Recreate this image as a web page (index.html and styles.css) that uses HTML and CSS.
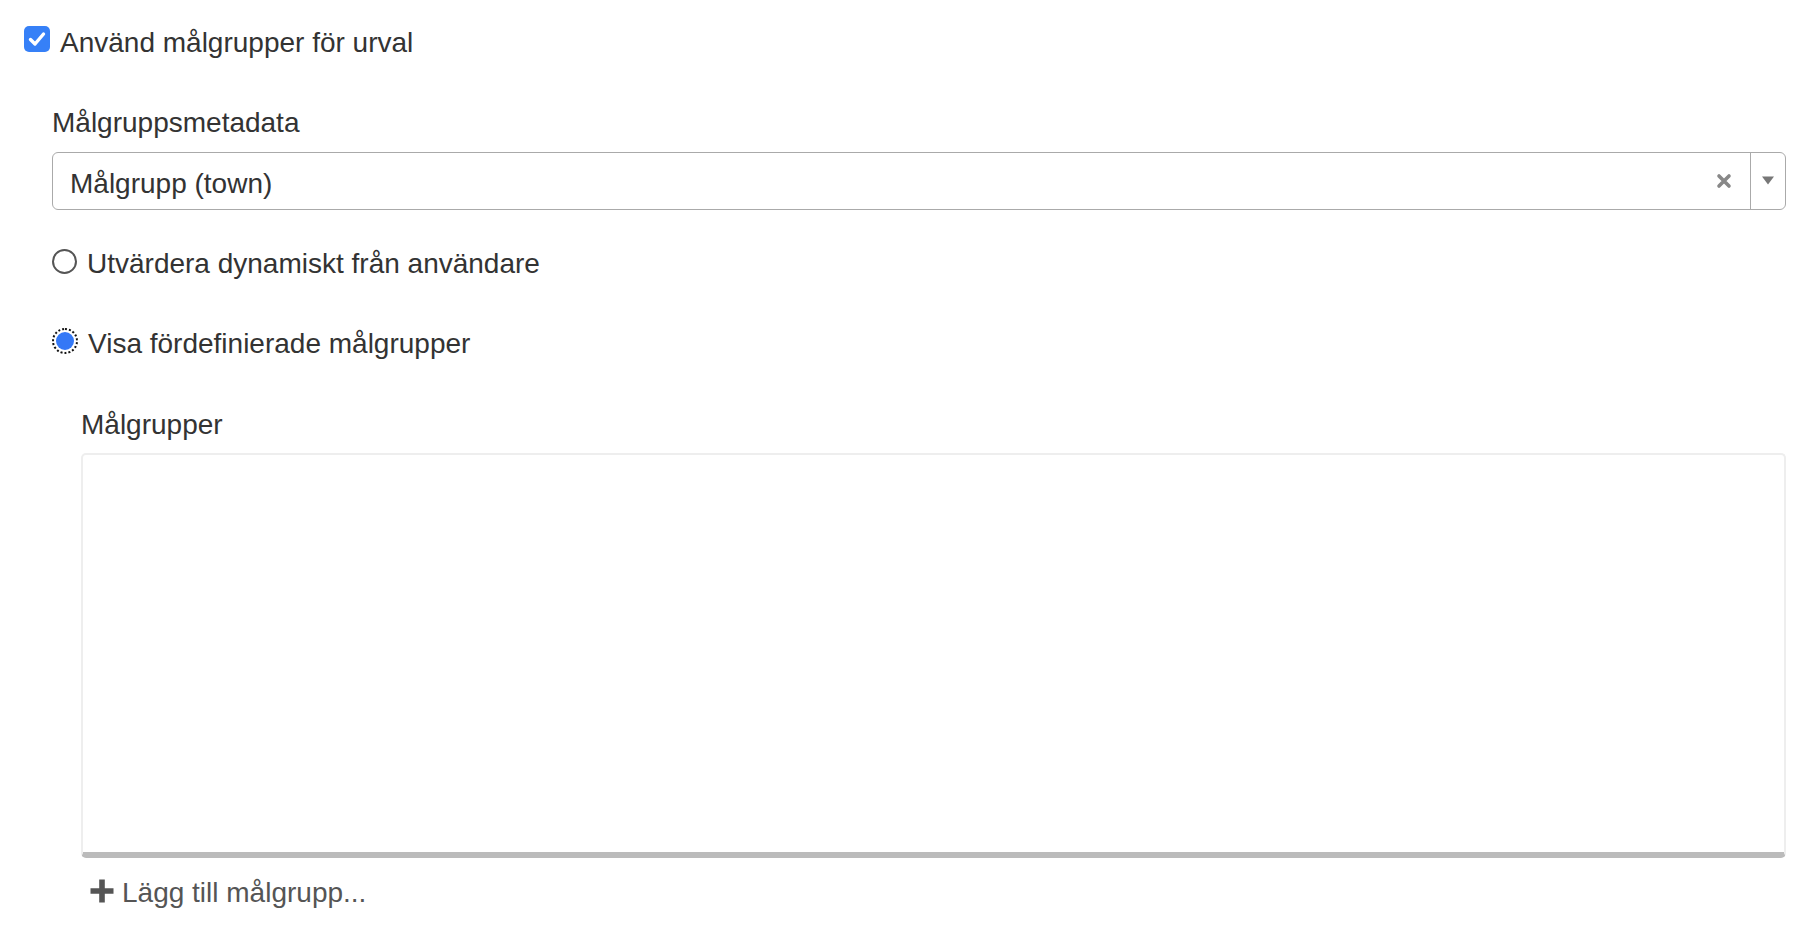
FILE: index.html
```html
<!DOCTYPE html>
<html lang="sv">
<head>
<meta charset="utf-8">
<title>Målgrupper</title>
<link rel="stylesheet" href="styles.css">
</head>
<body>
<div class="panel">
  <label class="check-row">
    <span class="checkbox" aria-checked="true">
      <svg viewBox="0 0 26 26" width="26" height="26"><path d="M6.5 13.5 L11 18 L19.5 8" fill="none" stroke="#fff" stroke-width="3.4" stroke-linecap="round" stroke-linejoin="round"/></svg>
    </span>
    <span class="check-text">Använd målgrupper för urval</span>
  </label>

  <div class="group">
    <div class="field-label">Målgruppsmetadata</div>
    <div class="select">
      <span class="select-value">Målgrupp (town)</span>
      <span class="select-clear">
        <svg viewBox="0 0 16 16" width="16" height="16"><path d="M3 3 L13 13 M13 3 L3 13" stroke="#888" stroke-width="3.6" stroke-linecap="round"/></svg>
      </span>
      <span class="select-toggle">
        <svg class="caret" viewBox="0 0 12 9" width="12" height="9"><path d="M0 0.5 H12 L6 8.5 Z" fill="#777"/></svg>
      </span>
    </div>

    <label class="radio-row first">
      <span class="radio"></span>
      <span class="radio-text">Utvärdera dynamiskt från användare</span>
    </label>

    <label class="radio-row second">
      <span class="radio checked"><span class="dot"></span></span>
      <span class="radio-text">Visa fördefinierade målgrupper</span>
    </label>

    <div class="nested">
      <div class="field-label list-label">Målgrupper</div>
      <div class="listbox"></div>
      <div class="add-row">
        <svg class="plus" viewBox="0 0 24 24" width="24" height="24"><path d="M12 0.5 V23.5 M0.5 12 H23.5" stroke="#555" stroke-width="5.6"/></svg>
        <span class="add-text">Lägg till målgrupp...</span>
      </div>
    </div>
  </div>
</div>
</body>
</html>
```

FILE: styles.css
```css
html, body {
  margin: 0;
  padding: 0;
  background: #fff;
}

body {
  font-family: "Liberation Sans", Arial, Helvetica, sans-serif;
  font-size: 28px;
  line-height: 40px;
  color: #333;
}

.panel {
  padding: 23px 26px 0 24px;
}

/* top checkbox */
.check-row {
  display: flex;
  align-items: flex-start;
  gap: 10px;
  height: 40px;
}

.checkbox {
  width: 26px;
  height: 26px;
  margin-top: 3px;
  border-radius: 5px;
  background: #3680f7;
  display: block;
  flex: none;
}

.checkbox svg {
  display: block;
}

.group {
  margin-left: 28px;
  margin-top: 40px;
}

.field-label {
  height: 40px;
}

/* select box */
.select {
  margin-top: 9px;
  height: 56px;
  border: 1px solid #aaa;
  border-radius: 6px;
  display: flex;
  align-items: center;
  color: #333;
}

.select-value {
  flex: 1;
  padding-left: 17px;
  padding-top: 5px;
}

.select-clear {
  width: 16px;
  height: 16px;
  margin-right: 18px;
  display: block;
  flex: none;
}

.select-clear svg,
.select-toggle svg {
  display: block;
  flex: none;
}

.select-toggle {
  width: 35px;
  height: 100%;
  border-left: 1px solid #aaa;
  display: flex;
  align-items: center;
  justify-content: center;
  padding-bottom: 2px;
  box-sizing: border-box;
  flex: none;
}

/* radio buttons */
.radio-row {
  display: flex;
  align-items: flex-start;
  gap: 10px;
  height: 40px;
}

.radio-row.first {
  margin-top: 34px;
}

.radio-row.second {
  margin-top: 40px;
}

.radio {
  width: 25px;
  height: 25px;
  margin-top: 5px;
  box-sizing: border-box;
  border: 2px solid #555;
  border-radius: 50%;
  background: #fff;
  flex: none;
  display: flex;
  align-items: center;
  justify-content: center;
}

.radio.checked {
  width: 26px;
  height: 26px;
  border: 2px dotted #111;
  margin-top: 4px;
}

.radio .dot {
  width: 18px;
  height: 18px;
  border-radius: 50%;
  background: #3478f6;
}

/* nested list of groups */
.nested {
  margin-left: 29px;
  margin-top: 41px;
}

.listbox {
  margin-top: 8px;
  height: 397px;
  border: 2px solid #eee;
  border-bottom: 6px solid #bbb;
  border-radius: 5px;
  background: #fff;
}

.add-row {
  margin-top: 15px;
  margin-left: 9px;
  display: flex;
  align-items: center;
  gap: 8px;
  height: 40px;
  color: #555;
}

.plus {
  display: block;
  flex: none;
  margin-top: -4px;
}
```
